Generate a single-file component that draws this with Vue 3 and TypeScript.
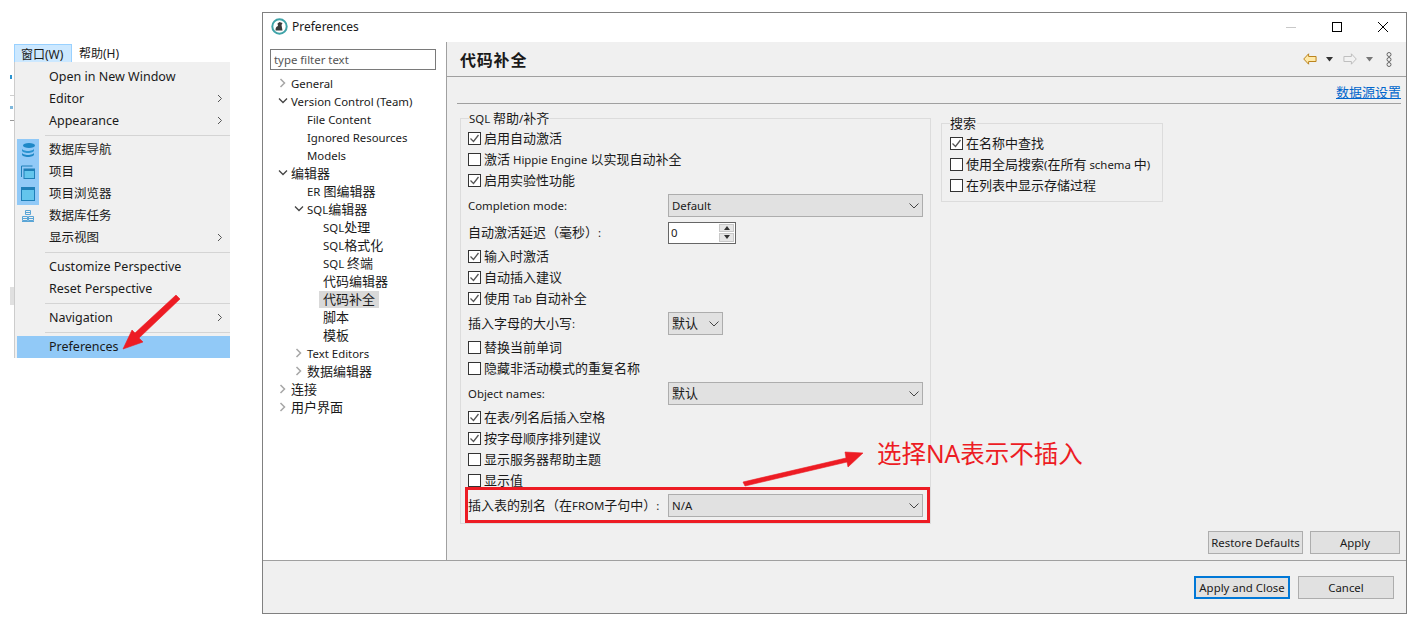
<script setup lang="ts">
import { h } from 'vue';

// Latin runs are set a little smaller than the CJK text, as in the reference's UI font.
const Txt = (props: { t: string }) =>
  props.t
    .split(/([\x00-\x7f]+)/)
    .filter(Boolean)
    .map((s) => h('span', { class: /^[\x00-\x7f]/.test(s) ? 'lat' : 'cjk' }, s));
Txt.props = ['t'];

type MenuItem = { label?: string; sub?: boolean; sep?: boolean; active?: boolean; icon?: string; iconOn?: boolean };
const menu: MenuItem[] = [
  { label: 'Open in New Window' },
  { label: 'Editor', sub: true },
  { label: 'Appearance', sub: true },
  { sep: true },
  { label: '数据库导航', icon: 'db', iconOn: true },
  { label: '项目', icon: 'proj', iconOn: true },
  { label: '项目浏览器', icon: 'win', iconOn: true },
  { label: '数据库任务', icon: 'task' },
  { label: '显示视图', sub: true },
  { sep: true },
  { label: 'Customize Perspective' },
  { label: 'Reset Perspective' },
  { sep: true },
  { label: 'Navigation', sub: true },
  { sep: true },
  { label: 'Preferences', active: true },
];
type TreeRow = { label: string; level: number; arrow?: 'open' | 'closed'; selected?: boolean };
const tree: TreeRow[] = [
  { label: 'General', level: 0, arrow: 'closed' },
  { label: 'Version Control (Team)', level: 0, arrow: 'open' },
  { label: 'File Content', level: 1 },
  { label: 'Ignored Resources', level: 1 },
  { label: 'Models', level: 1 },
  { label: '编辑器', level: 0, arrow: 'open' },
  { label: 'ER 图编辑器', level: 1 },
  { label: 'SQL编辑器', level: 1, arrow: 'open' },
  { label: 'SQL处理', level: 2 },
  { label: 'SQL格式化', level: 2 },
  { label: 'SQL 终端', level: 2 },
  { label: '代码编辑器', level: 2 },
  { label: '代码补全', level: 2, selected: true },
  { label: '脚本', level: 2 },
  { label: '模板', level: 2 },
  { label: 'Text Editors', level: 1, arrow: 'closed' },
  { label: '数据编辑器', level: 1, arrow: 'closed' },
  { label: '连接', level: 0, arrow: 'closed' },
  { label: '用户界面', level: 0, arrow: 'closed' },
];
type Row =
  | { kind: 'check'; label: string; on: boolean; top: number }
  | { kind: 'select'; label: string; value: string; top: number; small?: boolean }
  | { kind: 'spin'; label: string; value: string; top: number };
const rows: Row[] = [
  { kind: 'check', label: '启用自动激活', on: true, top: 0 },
  { kind: 'check', label: '激活 Hippie Engine 以实现自动补全', on: false, top: 0 },
  { kind: 'check', label: '启用实验性功能', on: true, top: 0 },
  { kind: 'select', label: 'Completion mode:', value: 'Default', top: 3 },
  { kind: 'spin', label: '自动激活延迟（毫秒）:', value: '0', top: 4 },
  { kind: 'check', label: '输入时激活', on: true, top: 2 },
  { kind: 'check', label: '自动插入建议', on: true, top: 0 },
  { kind: 'check', label: '使用 Tab 自动补全', on: true, top: 0 },
  { kind: 'select', label: '插入字母的大小写:', value: '默认', top: 3, small: true },
  { kind: 'check', label: '替换当前单词', on: false, top: 2 },
  { kind: 'check', label: '隐藏非活动模式的重复名称', on: false, top: 0 },
  { kind: 'select', label: 'Object names:', value: '默认', top: 3 },
  { kind: 'check', label: '在表/列名后插入空格', on: true, top: 2 },
  { kind: 'check', label: '按字母顺序排列建议', on: true, top: 0 },
  { kind: 'check', label: '显示服务器帮助主题', on: false, top: 0 },
  { kind: 'check', label: '显示值', on: false, top: 0 },
  { kind: 'select', label: '插入表的别名（在FROM子句中）:', value: 'N/A', top: 3 },
];
const search = [
  { label: '在名称中查找', on: true },
  { label: '使用全局搜索(在所有 schema 中)', on: false },
  { label: '在列表中显示存储过程', on: false },
];
</script>

<template>
  <div class="page">
    <div class="left">
      <div class="stray stray-a"></div>
      <div class="stray stray-b"></div>
      <div class="stray stray-c"></div>
      <div class="stray stray-d"></div>
      <div class="stray stray-e"></div>
      <div class="menubar">
        <span class="mb-item mb-on">窗口(W)</span>
        <span class="mb-item">帮助(H)</span>
      </div>
      <div class="menu">
        <template v-for="(m, i) in menu" :key="i">
          <div v-if="m.sep" class="msep"></div>
          <div v-else class="mrow" :class="{ active: m.active }">
            <span class="micon" :class="{ on: m.iconOn }">
              <svg v-if="m.icon === 'db'" width="16" height="16" viewBox="0 0 16 16">
                <ellipse cx="9" cy="3.500" rx="6" ry="2.500" fill="#1e88c7" />
                <path d="M2 6.500c0 1.500 3 2.500 6 2.500s6-1 6-2.500v2c0 1.500-3 2.500-6 2.500s-6-1-6-2.500z" fill="#2a93d0" />
                <path d="M2 10.500c0 1.500 3 2.500 6 2.500s6-1 6-2.500v2c0 1.500-3 2.500-6 2.500s-6-1-6-2.500z" fill="#1e88c7" />
              </svg>
              <svg v-else-if="m.icon === 'proj'" width="16" height="16" viewBox="0 0 16 16">
                <path d="M1.500 13V2h11" fill="none" stroke="#1e7fb8" stroke-width="1" />
                <rect x="4" y="5" width="10.500" height="9.500" fill="#63c5ec" stroke="#1e7fb8" />
                <rect x="4" y="5" width="10.500" height="2" fill="#1e7fb8" />
              </svg>
              <svg v-else-if="m.icon === 'win'" width="16" height="16" viewBox="0 0 16 16">
                <rect x="1.500" y="1.500" width="13" height="13" fill="#63c5ec" stroke="#1e7fb8" />
                <rect x="1.500" y="1.500" width="13" height="2.500" fill="#1e7fb8" />
              </svg>
              <svg v-else-if="m.icon === 'task'" width="14" height="14" viewBox="0 0 14 14">
                <path d="M4.500 1.500h5v4h-5zM1.500 7.500h5v4h-5zM7.500 7.500h5v4h-5zM1 12.500h12" fill="none" stroke="#5aa5d6" />
                <path d="M2 9.500h4M8 9.500h4M5 3.500h4" stroke="#5aa5d6" />
              </svg>
            </span>
            <span class="mlabel">{{ m.label }}</span>
            <svg v-if="m.sub" class="msub" width="6" height="9" viewBox="0 0 6 9">
              <path d="M1 1l3.500 3.500L1 8" fill="none" stroke="#555" stroke-width="1" />
            </svg>
          </div>
        </template>
      </div>
    </div>

    <div class="dialog">
      <div class="titlebar">
        <svg class="appicon" width="17" height="17" viewBox="0 0 17 17">
          <circle cx="8.500" cy="8.500" r="7.200" fill="#fff" stroke="#3fa3a8" stroke-width="2" />
          <path d="M4.500 12.500c0-3 1-4 2.500-4.500l-.5-2.500 2-1.500 3 1-1 2 1 5.500z" fill="#3a3a3a" />
        </svg>
        <span class="title">Preferences</span>
        <span class="winbtns">
          <svg width="12" height="12" viewBox="0 0 12 12"><path d="M1 6.500h10" stroke="#c8c8c8" /></svg>
          <svg width="12" height="12" viewBox="0 0 12 12"><rect x="1.500" y="1.500" width="9" height="9" fill="none" stroke="#000" /></svg>
          <svg width="12" height="12" viewBox="0 0 12 12"><path d="M1 1l10 10M11 1L1 11" stroke="#000" /></svg>
        </span>
      </div>

      <div class="main">
        <div class="side">
          <div class="filter">type filter text</div>
          <div class="tree">
            <div v-for="t in tree" :key="t.label" class="trow" :class="'lv' + t.level">
              <span class="twist">
                <svg v-if="t.arrow === 'closed'" width="8" height="10" viewBox="0 0 8 10">
                  <path d="M1.500 1l4 4-4 4" fill="none" stroke="#a6a6a6" stroke-width="1.500" />
                </svg>
                <svg v-else-if="t.arrow === 'open'" width="10" height="8" viewBox="0 0 10 8">
                  <path d="M1 1.500l4 4 4-4" fill="none" stroke="#444" stroke-width="1.300" />
                </svg>
              </span>
              <span class="tlabel" :class="{ sel: t.selected }"><Txt :t="t.label" /></span>
            </div>
          </div>
        </div>

        <div class="content">
          <div class="head">
            <span class="head-title">代码补全</span>
            <span class="tools">
              <svg width="14" height="12" viewBox="0 0 15 12" preserveAspectRatio="none"><path d="M.8 6L6 .8v2.700h8v5H6v2.700z" fill="#ffe9a8" stroke="#b97f18" /></svg>
              <svg class="tri" width="7" height="5" viewBox="0 0 8 5" preserveAspectRatio="none"><path d="M0 0h8L4 4.500z" fill="#333" /></svg>
              <svg class="fwd" width="14" height="12" viewBox="0 0 15 12" preserveAspectRatio="none"><path d="M14.200 6L9 .8v2.700H1v5h8v2.700z" fill="#f2f2f2" stroke="#bdbdbd" /></svg>
              <svg class="tri" width="7" height="5" viewBox="0 0 8 5" preserveAspectRatio="none"><path d="M0 0h8L4 4.500z" fill="#777" /></svg>
              <svg class="more" width="6" height="15" viewBox="0 0 6 15">
                <circle cx="3" cy="2.500" r="2" fill="none" stroke="#666" />
                <circle cx="3" cy="7.500" r="2" fill="none" stroke="#666" />
                <circle cx="3" cy="12.500" r="2" fill="none" stroke="#666" />
              </svg>
            </span>
          </div>
          <div class="linkrow"><span class="link">数据源设置</span></div>

          <div class="groups">
            <div class="group main-group">
              <span class="legend"><Txt t="SQL 帮助/补齐" /></span>
              <div
                v-for="r in rows"
                :key="r.label"
                class="frow"
                :class="[r.kind === 'check' ? 'is-check' : 'is-field', 'mt' + r.top]"
              >
                <template v-if="r.kind === 'check'">
                  <span class="cb">
                    <svg v-if="r.on" width="11" height="11" viewBox="0 0 11 11"><path d="M1.500 5.500l3 3 5-6.500" fill="none" stroke="#555" stroke-width="1.300" /></svg>
                  </span>
                  <span class="cl"><Txt :t="r.label" /></span>
                </template>
                <template v-else>
                  <span class="fl"><Txt :t="r.label" /></span>
                  <span v-if="r.kind === 'select'" class="select" :class="{ small: r.small }">
                    <span class="sv"><Txt :t="r.value" /></span>
                    <svg width="10" height="6" viewBox="0 0 10 6"><path d="M.5.500L5 5 9.500.500" fill="none" stroke="#444" /></svg>
                  </span>
                  <span v-else class="spin">
                    <span class="spin-v">{{ r.value }}</span>
                    <span class="spin-btns">
                      <span class="sb"><i class="up"></i></span>
                      <span class="sb"><i class="down"></i></span>
                    </span>
                  </span>
                </template>
              </div>
            </div>

            <div class="group search-group">
              <span class="legend">搜索</span>
              <div v-for="s in search" :key="s.label" class="frow is-check">
                <span class="cb">
                  <svg v-if="s.on" width="11" height="11" viewBox="0 0 11 11"><path d="M1.500 5.500l3 3 5-6.500" fill="none" stroke="#555" stroke-width="1.300" /></svg>
                </span>
                <span class="cl"><Txt :t="s.label" /></span>
              </div>
            </div>
          </div>

          <div class="actions">
            <button class="btn restore">Restore Defaults</button>
            <button class="btn apply">Apply</button>
          </div>
        </div>
      </div>

      <div class="footer">
        <button class="btn primary">Apply and Close</button>
        <button class="btn cancel">Cancel</button>
      </div>
    </div>

    <div class="redbox"></div>
    <span class="note">选择NA表示不插入</span>
    <svg class="overlay" width="1416" height="623" viewBox="0 0 1416 623">
      <path d="M176 295L135 333l-3-3-9 19 20-7-4-4 41-39z" fill="#ed1c24" stroke="#ed1c24" stroke-width=".6" stroke-linejoin="round" />
      <path d="M743 482l103-24-1-6 18 1-15 14-1-5-102 24z" fill="#ed1c24" stroke="#ed1c24" stroke-width=".6" stroke-linejoin="round" />
    </svg>
  </div>
</template>

<style>
html, body { margin: 0; background: #fff; }
.lat { font-size: 11.4px; }
</style>

<style scoped>
.page {
  position: relative;
  width: 1416px;
  height: 623px;
  overflow: hidden;
  display: flex;
  align-items: flex-start;
  background: #fff;
  color: #1a1a1a;
  font-family: "Noto Sans", "Noto Sans CJK SC", sans-serif;
  font-size: 12px;
}
.left { position: relative; width: 262px; flex: none; padding: 44px 0 0 14px; box-sizing: border-box; }
.stray { position: absolute; }
.stray-a { left: 10px; top: 75px; width: 2px; height: 4px; background: #2a93d0; }
.stray-b { left: 10px; top: 95px; width: 4px; height: 1px; background: #cfcfcf; }
.stray-c { left: 10px; top: 106px; width: 3px; height: 3px; background: #7fb8dc; }
.stray-d { left: 10px; top: 120px; width: 4px; height: 1px; background: #999; }
.stray-e { left: 10px; top: 287px; width: 4px; height: 18px; background: #e0e0e0; }
.menubar { display: flex; height: 18px; width: 216px; }
.mb-item { display: flex; align-items: center; padding: 0 6px; font-size: 12px; }
.mb-on { width: 58px; box-sizing: border-box; background: #cce8ff; border: 1px solid #99d1ff; border-bottom: 0; }
.mb-item:not(.mb-on) { padding-left: 7px; }
.menu { width: 216px; box-sizing: border-box; background: #f0f0f0; border-left: 1px solid #ccc; padding: 4px 0 0 2px; height: 296px; }
.mrow { height: 22px; display: flex; align-items: center; position: relative; }
.mrow.active { background: #91c9f7; }
.micon { width: 22px; height: 22px; margin-right: 10px; display: flex; align-items: center; justify-content: center; }
.micon.on { background: #91c9f7; }
.mlabel { font-size: 12.5px; line-height: 22px; white-space: nowrap; }
.msub { position: absolute; right: 7px; top: 6px; }
.msep { height: 1px; margin: 3px 0 3px 28px; background: #d4d4d4; }

.dialog {
  margin-top: 12px;
  width: 1145px;
  height: 602px;
  box-sizing: border-box;
  border: 1px solid #808080;
  display: flex;
  flex-direction: column;
  flex: none;
}
.titlebar { height: 29px; box-sizing: border-box; flex: none; display: flex; align-items: center; padding: 0 0 2px 8px; background: #fff; }
.title { margin-left: 4px; font-size: 12px; }
.winbtns { margin-left: auto; display: flex; gap: 34px; padding-right: 17px; }
.main { flex: 1; display: flex; min-height: 0; border-bottom: 1px solid #a0a0a0; }
.side { width: 184px; flex: none; box-sizing: border-box; background: #fff; border-right: 1px solid #a0a0a0; padding: 7px 0 0 7px; font-size: 13px; }
.filter { width: 166px; height: 21px; box-sizing: border-box; border: 1px solid #7a7a7a; font-size: 11.4px; line-height: 19px; padding-left: 3px; color: #555; }
.tree { margin-top: 4px; }
.trow { height: 18px; display: flex; align-items: center; white-space: nowrap; }
.twist { width: 15px; height: 18px; flex: none; display: flex; align-items: center; justify-content: center; }
.lv0 { padding-left: 5px; }
.lv1 { padding-left: 21px; }
.lv2 { padding-left: 37px; }
.tlabel { padding: 0 2px 0 1px; line-height: 17px; }
.tlabel.sel { background: #d9d9d9; margin-left: -3px; padding: 0 4px; }

.content { flex: 1; min-width: 0; background: #f0f0f0; display: flex; flex-direction: column; font-size: 13px; }
.head { height: 35px; box-sizing: border-box; flex: none; border-bottom: 1px solid #a0a0a0; display: flex; align-items: center; padding: 0 13px; }
.head-title { font-weight: 700; font-size: 16px; letter-spacing: .8px; }
.tools { margin-left: auto; display: flex; align-items: center; margin-right: 1px; }
.tools .tri { margin-left: 9px; }
.tools .fwd { margin-left: 10px; }
.tools .more { margin-left: 13px; }
.linkrow { height: 27px; margin: 0 5px 0 10px; box-sizing: border-box; border-bottom: 1px solid #a0a0a0; display: flex; justify-content: flex-end; align-items: center; padding-top: 2px; flex: none; }
.link { color: #0066cc; text-decoration: underline; font-size: 13px; }
.groups { display: flex; align-items: flex-start; margin: 14px 0 0 13px; gap: 10px; flex: none; }
.group { position: relative; box-sizing: border-box; border: 1px solid #dcdcdc; }
.main-group { width: 471px; height: 406px; padding: 9px 7px 0 7px; }
.search-group { width: 222px; height: 79px; margin-top: 5px; padding: 9px 7px 0 8px; }
.legend { position: absolute; left: 8px; top: -9px; background: #f0f0f0; line-height: 16px; font-size: 13px; padding-right: 1px; }
.frow { display: flex; align-items: center; white-space: nowrap; }
.is-check { height: 21px; }
.is-field { height: 23px; }
.mt2 { margin-top: 2px; }
.mt3 { margin-top: 3px; }
.mt4 { margin-top: 4px; }
.cb { width: 13px; height: 13px; flex: none; box-sizing: border-box; border: 1px solid #333; background: #fff; display: flex; align-items: center; justify-content: center; margin-right: 3px; }
.cl { padding-bottom: 2px; }
.fl { width: 200px; flex: none; padding-bottom: 2px; }
.select { width: 255px; height: 23px; box-sizing: border-box; background: #e1e1e1; border: 1px solid #adadad; display: flex; align-items: center; justify-content: space-between; padding: 0 3px 0 3px; }
.sv { padding-bottom: 2px; }
.select.small { width: 55px; }
.spin { width: 68px; height: 22px; box-sizing: border-box; background: #fff; border: 1px solid #666; display: flex; align-items: center; justify-content: space-between; padding: 1px; font-size: 11.4px; }
.spin-v { padding-left: 1px; }
.spin-btns { display: flex; flex-direction: column; width: 15px; height: 18px; gap: 1px; }
.sb { flex: 1; background: #e6e6e6; border: 1px solid #c8c8c8; box-sizing: border-box; display: flex; align-items: center; justify-content: center; }
.sb i { width: 0; height: 0; border-left: 3px solid transparent; border-right: 3px solid transparent; }
.sb i.up { border-bottom: 4px solid #333; }
.sb i.down { border-top: 4px solid #333; }
.actions { margin-top: auto; height: 29px; box-sizing: border-box; display: flex; justify-content: flex-end; gap: 7px; padding-right: 6px; flex: none; }
.btn { box-sizing: border-box; height: 23px; background: #e1e1e1; border: 1px solid #adadad; border-radius: 0; padding: 0; color: #1a1a1a; font: inherit; font-size: 11.4px; white-space: nowrap; }
.restore { width: 95px; }
.apply { width: 90px; }
.footer { height: 52px; flex: none; background: #f0f0f0; display: flex; justify-content: flex-end; align-items: flex-start; gap: 8px; padding: 15px 12px 0 0; box-sizing: border-box; }
.primary { width: 96px; border: 2px solid #0078d7; }
.cancel { width: 96px; }

.redbox { position: absolute; left: 465px; top: 487px; width: 465px; height: 36px; box-sizing: border-box; border: 3px solid #ed1c24; pointer-events: none; }
.note { position: absolute; left: 877px; top: 437px; color: #ed1c24; font-size: 24.5px; line-height: 34px; white-space: nowrap; }
.overlay { position: absolute; left: 0; top: 0; pointer-events: none; }
</style>
